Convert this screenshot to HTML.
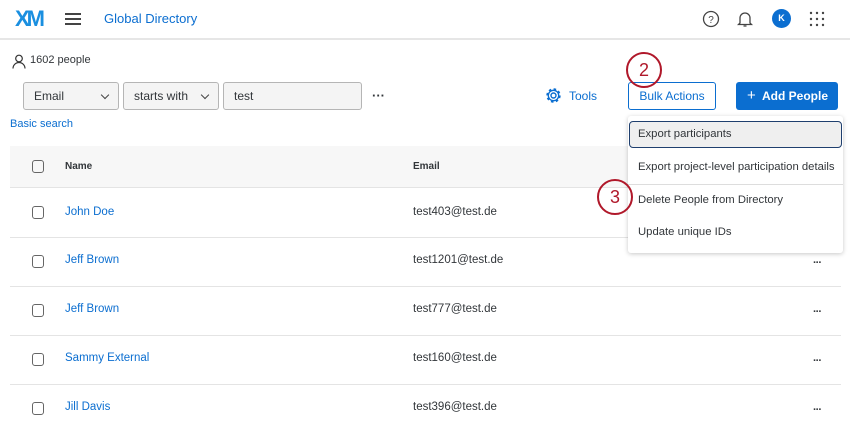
<!DOCTYPE html>
<html><head><style>
*{box-sizing:border-box;margin:0;padding:0}
body{width:850px;height:424px;overflow:hidden;background:#fff;font-family:"Liberation Sans",sans-serif;color:#32363a;position:relative;font-size:12px}
.a{position:absolute}
.blue{color:#0b6ed0}
.sel{position:absolute;top:82px;height:28px;border:1px solid #b5b5b5;border-radius:3px;background:#f4f4f4;font-size:12px;line-height:26px;padding-left:10px}
.chev{position:absolute;right:10px;top:9px;width:6px;height:6px;border-right:1.3px solid #444;border-bottom:1.3px solid #444;transform:rotate(45deg)}
.row{position:absolute;left:10px;width:831px;height:49px;border-bottom:1px solid #e4e4e4}
.cb{position:absolute;left:22px;width:12px;height:13px;border:1.3px solid #666;border-radius:3px}
.nm{position:absolute;left:55px;color:#0b6ed0;font-size:11.5px}
.em{position:absolute;left:403px;font-size:11.5px}
.dots{position:absolute;left:803px;font-size:11px;font-weight:bold;letter-spacing:-1px}
.mi{position:absolute;left:638px;font-size:11.3px}
.circ{position:absolute;width:36px;height:36px;border:2px solid #b0182a;border-radius:50%;color:#b0182a;font-size:18px;text-align:center;line-height:32px;background:transparent}
</style></head><body>
<div class="a" style="left:15px;top:6px;font-size:22px;font-weight:bold;letter-spacing:-3px;color:#1a8fe0">XM</div>
<div class="a" style="left:65px;top:13px;width:16px;height:2px;background:#444;box-shadow:0 5px 0 #444,0 10px 0 #444"></div>
<div class="a blue" style="left:104px;top:11px;font-size:13px">Global Directory</div>
<svg class="a" style="left:702px;top:10px" width="18" height="18"><circle cx="9" cy="9" r="7.5" fill="none" stroke="#444" stroke-width="1.3"/><text x="9" y="13" font-size="10" text-anchor="middle" fill="#444" font-family="Liberation Sans">?</text></svg>
<svg class="a" style="left:737px;top:10px" width="16" height="18"><path d="M3 13V8a5 5 0 0 1 10 0v5l1.5 1.5h-13z M6.5 16h3" fill="none" stroke="#444" stroke-width="1.3"/></svg>
<div class="a" style="left:772px;top:9px;width:19px;height:19px;border-radius:50%;background:#0b6ed0;color:#fff;font-size:9px;font-weight:bold;text-align:center;line-height:19px">K</div>
<svg class="a" style="left:809px;top:11px" width="16" height="16" fill="#444"><circle cx="2" cy="2" r="1.2"/><circle cx="8" cy="2" r="1.2"/><circle cx="14" cy="2" r="1.2"/><circle cx="2" cy="8" r="1.2"/><circle cx="8" cy="8" r="1.2"/><circle cx="14" cy="8" r="1.2"/><circle cx="2" cy="14" r="1.2"/><circle cx="8" cy="14" r="1.2"/><circle cx="14" cy="14" r="1.2"/></svg>
<div class="a" style="left:0;top:38px;width:850px;height:2px;background:#e6e6e6"></div>
<svg class="a" style="left:12px;top:54px" width="14" height="15"><circle cx="7" cy="4.5" r="3.3" fill="none" stroke="#333" stroke-width="1.2"/><path d="M1 14.5a6 6 0 0 1 12 0" fill="none" stroke="#333" stroke-width="1.2"/></svg>
<div class="a" style="left:30px;top:54px;font-size:11px">1602 people</div>
<div class="sel" style="left:23px;width:96px">Email<span class="chev"></span></div>
<div class="sel" style="left:123px;width:96px">starts with<span class="chev"></span></div>
<div class="sel" style="left:223px;width:139px">test</div>
<div class="a" style="left:372px;top:88px;font-size:13px;font-weight:bold">···</div>
<div class="a blue" style="left:10px;top:118px;font-size:11px">Basic search</div>
<svg class="a" style="left:545px;top:87px" width="17" height="17"><circle cx="8.5" cy="8.5" r="2.5" fill="none" stroke="#0b6ed0" stroke-width="1.4"/><circle cx="8.5" cy="8.5" r="6" fill="none" stroke="#0b6ed0" stroke-width="2.4" stroke-dasharray="2.4 2.3"/><circle cx="8.5" cy="8.5" r="5.2" fill="none" stroke="#0b6ed0" stroke-width="1.3"/></svg>
<div class="a blue" style="left:569px;top:89px;font-size:12px">Tools</div>
<div class="a blue" style="left:628px;top:82px;width:88px;height:28px;border:1px solid #0b6ed0;border-radius:3px;font-size:12px;text-align:center;line-height:26px">Bulk Actions</div>
<div class="a" style="left:736px;top:82px;width:102px;height:28px;background:#0b6ed0;border-radius:3px;color:#fff;font-size:12px;font-weight:bold;line-height:28px;padding-left:11px"><span style="font-weight:normal;font-size:15px">+</span>&nbsp; Add People</div>
<div class="circ" style="left:626px;top:52px">2</div>

<div class="a" style="left:10px;top:146px;width:831px;height:42px;background:#f7f7f7;border-bottom:1px solid #e4e4e4"></div>
<div class="cb" style="top:160px;left:32px"></div>
<div class="a" style="left:65px;top:161px;font-size:10px;font-weight:bold">Name</div>
<div class="a" style="left:413px;top:161px;font-size:10px;font-weight:bold">Email</div>

<div class="row" style="top:189px"><div class="cb" style="top:17px"></div><div class="nm" style="top:17px">John Doe</div><div class="em" style="top:17px">test403@test.de</div></div>
<div class="row" style="top:238px"><div class="cb" style="top:17px"></div><div class="nm" style="top:16px">Jeff Brown</div><div class="em" style="top:16px">test1201@test.de</div><div class="dots" style="top:19px">···</div></div>
<div class="row" style="top:287px"><div class="cb" style="top:17px"></div><div class="nm" style="top:16px">Jeff Brown</div><div class="em" style="top:16px">test777@test.de</div><div class="dots" style="top:19px">···</div></div>
<div class="row" style="top:336px"><div class="cb" style="top:17px"></div><div class="nm" style="top:16px">Sammy External</div><div class="em" style="top:16px">test160@test.de</div><div class="dots" style="top:19px">···</div></div>
<div class="row" style="top:385px;border:none"><div class="cb" style="top:17px"></div><div class="nm" style="top:16px">Jill Davis</div><div class="em" style="top:16px">test396@test.de</div><div class="dots" style="top:19px">···</div></div>

<div class="a" style="left:628px;top:116px;width:215px;height:137px;background:#fff;border-radius:3px;box-shadow:0 1px 5px rgba(0,0,0,.22)"></div>
<div class="a" style="left:629px;top:121px;width:213px;height:27px;background:#efefef;border:1.5px solid #1f3f6e;border-radius:4px"></div>
<div class="a" style="left:628px;top:184px;width:215px;height:1px;background:#ddd"></div>
<div class="mi" style="top:128px">Export participants</div>
<div class="mi" style="top:161px">Export project-level participation details</div>
<div class="mi" style="top:194px">Delete People from Directory</div>
<div class="mi" style="top:226px">Update unique IDs</div>
<div class="circ" style="left:597px;top:179px">3</div>
</body></html>
